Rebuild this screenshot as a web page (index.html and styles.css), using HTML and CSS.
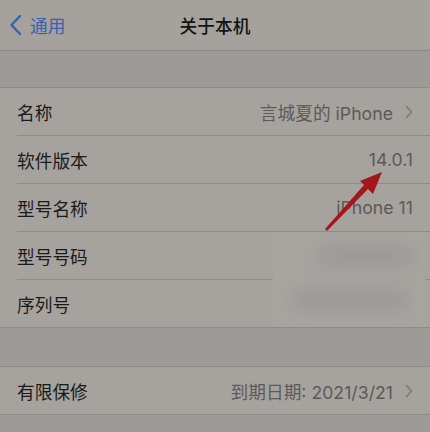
FILE: index.html
```html
<!DOCTYPE html>
<html lang="zh-CN">
<head>
    <meta charset="UTF-8">
    <meta name="viewport" content="width=device-width, initial-scale=1.0">
    <title>关于本机</title>
    <link rel="stylesheet" href="styles.css">
</head>
<body>
    <div class="nav">
        <a class="nav-back" href="#">
            <svg class="back-icon" viewBox="0 0 13 22" fill="none" stroke="currentColor">
                <path d="M11 2L2.5 11L11 20" stroke-width="2.4" stroke-linecap="round" stroke-linejoin="round" />
            </svg>
            <span>通用</span>
        </a>
        <div class="nav-title">关于本机</div>
    </div>

    <div class="gap"></div>

    <div class="group">
        <div class="row">
            <div class="row-inner">
                <span class="label">名称</span>
                <span class="value">言城夏的 iPhone</span>
                <svg class="chev" viewBox="0 0 8 14" fill="none" stroke="currentColor">
                    <path d="M1.5 1.5L6.5 7L1.5 12.5" stroke-width="1.6" stroke-linecap="round" stroke-linejoin="round" />
                </svg>
            </div>
        </div>
        <div class="row">
            <div class="row-inner">
                <span class="label">软件版本</span>
                <span class="value">14.0.1</span>
            </div>
        </div>
        <div class="row">
            <div class="row-inner">
                <span class="label">型号名称</span>
                <span class="value">iPhone 11</span>
            </div>
        </div>
        <div class="row">
            <div class="row-inner">
                <span class="label">型号号码</span>
            </div>
        </div>
        <div class="row">
            <div class="row-inner">
                <span class="label">序列号</span>
            </div>
        </div>
    </div>

    <div class="gap gap-lg"></div>

    <div class="group">
        <div class="row">
            <div class="row-inner">
                <span class="label">有限保修</span>
                <span class="value">到期日期: 2021/3/21</span>
                <svg class="chev" viewBox="0 0 8 14" fill="none" stroke="currentColor">
                    <path d="M1.5 1.5L6.5 7L1.5 12.5" stroke-width="1.6" stroke-linecap="round" stroke-linejoin="round" />
                </svg>
            </div>
        </div>
    </div>

    <!-- blurred-out model number / serial -->
    <div class="mosaic">
        <div class="smudge smudge-1"></div>
        <div class="smudge smudge-2"></div>
    </div>

    <svg class="arrow" viewBox="0 0 430 432">
        <polygon points="325,229 364,185 360,181 382,172 373,194 368,189 327,231" fill="#a3171a" />
    </svg>
</body>
</html>
```

FILE: styles.css
```css
body {
    margin: 0;
    background-color: #9e9a98;
    font-family: "Inter", "Noto Sans CJK SC", sans-serif;
    font-size: 17.7px;
    color: #1b1a19;
    position: relative;
    min-height: 432px;
    overflow: hidden;
}

.nav {
    height: 50px;
    background-color: #a5a29e;
    border-bottom: 1px solid #8c8986;
    display: flex;
    align-items: center;
    justify-content: center;
    position: relative;
}

.nav-back {
    position: absolute;
    left: 9px;
    top: 0;
    height: 50px;
    display: flex;
    align-items: center;
    gap: 8px;
    color: #3861b0;
    text-decoration: none;
}

.back-icon {
    width: 13px;
    height: 22px;
}

.nav-title {
    font-weight: 500;
    color: #141312;
}

.gap {
    height: 36px;
}

.gap-lg {
    height: 38px;
}

.group {
    background-color: #a6a39f;
    border-top: 1px solid #8e8b88;
    border-bottom: 1px solid #8e8b88;
}

.row {
    padding-left: 17px;
}

.row-inner {
    height: 47px;
    display: flex;
    align-items: center;
    padding-right: 17px;
    border-bottom: 1px solid #8e8b88;
}

.row:last-child .row-inner {
    height: 47px;
    border-bottom: none;
}

.label {
    flex: 1;
}

.value {
    color: #5c5a58;
}

.chev {
    width: 8px;
    height: 14px;
    margin-left: 12px;
    color: #7b7875;
}

.mosaic {
    position: absolute;
    left: 273px;
    top: 232px;
    width: 152px;
    height: 95px;
    background-color: #a8a5a1;
    overflow: hidden;
}

.smudge {
    position: absolute;
    border-radius: 20px;
    background-color: #9b9895;
    filter: blur(9px);
}

.smudge-1 {
    left: 42px;
    top: 14px;
    width: 100px;
    height: 20px;
}

.smudge-2 {
    left: 18px;
    top: 58px;
    width: 120px;
    height: 20px;
}

.arrow {
    position: absolute;
    left: 0;
    top: 0;
    width: 430px;
    height: 432px;
    pointer-events: none;
}
```
